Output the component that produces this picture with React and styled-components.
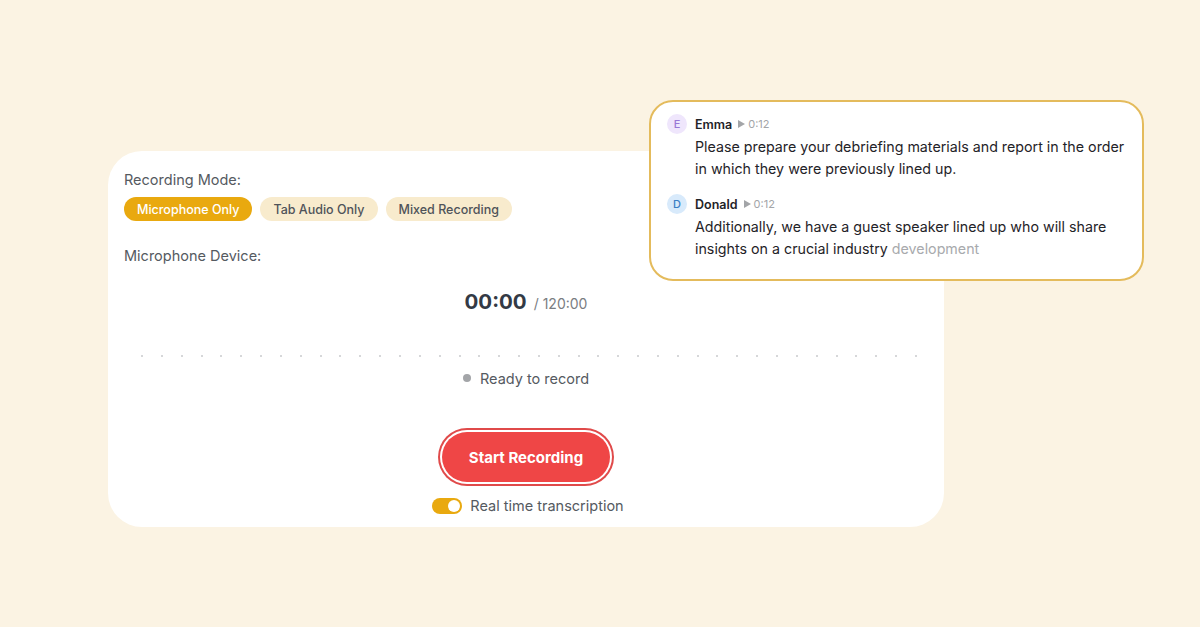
import React from "react";
import styled, { createGlobalStyle } from "styled-components";

const GlobalStyle = createGlobalStyle`
  html, body {
    margin: 0;
    padding: 0;
    background: #fbf3e3;
    font-family: Inter, "Noto Sans", "Liberation Sans", sans-serif;
  }
`;

const Stage = styled.div`
  position: relative;
  width: 1200px;
  height: 627px;
  box-sizing: border-box;
  padding: 151px 0 0 108px;
  overflow: hidden;
`;

const RecorderCard = styled.div`
  width: 836px;
  height: 376px;
  box-sizing: border-box;
  background: #fff;
  border-radius: 34px;
  padding: 19px 16px 0 16px;
  display: flex;
  flex-direction: column;
`;

const Label = styled.div`
  font-size: 14.5px;
  line-height: 20px;
  color: #555a61;
  margin-top: ${(p) => p.$top || 0}px;
`;

const ModeRow = styled.div`
  display: flex;
  gap: 8px;
  margin-top: 7px;
`;

const ModePill = styled.button`
  height: 24px;
  padding: 0 13px;
  border: none;
  border-radius: 12px;
  font-family: inherit;
  font-size: 12.5px;
  font-weight: 500;
  background: ${(p) => (p.$active ? "#e9a90f" : "#f8ebcd")};
  color: ${(p) => (p.$active ? "#fff" : "#4f5359")};
  cursor: pointer;
`;

const TimerRow = styled.div`
  display: flex;
  justify-content: center;
  align-items: baseline;
  gap: 7px;
  margin-top: 22px;
`;

const TimerNow = styled.span`
  font-size: 20.5px;
  font-weight: 700;
  color: #333a45;
  line-height: 28px;
`;

const TimerMax = styled.span`
  font-size: 14px;
  color: #7a7d82;
`;

const DotsRow = styled.div`
  display: flex;
  justify-content: space-between;
  padding: 0 11px 0 17px;
  margin-top: 39px;
`;

const WaveDot = styled.span`
  width: 2px;
  height: 2px;
  border-radius: 50%;
  background: #c9cacc;
`;

const StatusRow = styled.div`
  display: flex;
  justify-content: center;
  align-items: center;
  gap: 9px;
  margin-top: 12px;
  font-size: 14.5px;
  color: #555a61;
  line-height: 20px;
`;

const StatusDot = styled.span`
  width: 8px;
  height: 8px;
  border-radius: 50%;
  background: #a3a5a8;
  margin-top: -2px;
`;

const StartButton = styled.button`
  align-self: center;
  margin-top: 43px;
  width: 168px;
  height: 50px;
  border: none;
  border-radius: 25px;
  background: #ef4646;
  color: #fff;
  font-family: inherit;
  font-size: 15px;
  font-weight: 700;
  box-shadow: 0 0 0 2px #fff, 0 0 0 4px #e04a4a;
  cursor: pointer;
`;

const ToggleRow = styled.div`
  display: flex;
  justify-content: center;
  align-items: center;
  gap: 8px;
  margin-top: 15px;
  margin-left: 4px;
  font-size: 14.5px;
  color: #555a61;
`;

const Switch = styled.span`
  width: 30px;
  height: 16px;
  border-radius: 8px;
  background: #e9a90f;
  display: flex;
  justify-content: flex-end;
  align-items: center;
  padding: 0 2px;
  box-sizing: border-box;
`;

const Knob = styled.span`
  width: 12px;
  height: 12px;
  border-radius: 50%;
  background: #fff;
`;

const TranscriptCard = styled.div`
  position: absolute;
  top: 100px;
  left: 649px;
  width: 495px;
  height: 181px;
  box-sizing: border-box;
  background: #fff;
  border: 2px solid #e4bb5c;
  border-radius: 24px;
  padding: 12px 16px 0 16px;
  display: flex;
  flex-direction: column;
  gap: 14px;
`;

const Entry = styled.div`
  display: flex;
  flex-direction: column;
`;

const Speaker = styled.div`
  display: flex;
  align-items: center;
  height: 20px;
`;

const Avatar = styled.span`
  width: 20px;
  height: 20px;
  border-radius: 50%;
  background: ${(p) => p.$bg};
  color: ${(p) => p.$fg};
  font-size: 11px;
  font-weight: 500;
  display: flex;
  align-items: center;
  justify-content: center;
  margin-right: 8px;
`;

const Name = styled.span`
  font-size: 12.5px;
  font-weight: 600;
  color: #1f2328;
  margin-right: 6px;
`;

const Stamp = styled.span`
  display: flex;
  align-items: center;
  gap: 3px;
  font-size: 11px;
  color: #a3a5a8;
`;

const Message = styled.div`
  padding-left: 28px;
  margin-top: 2px;
  font-size: 14.25px;
  line-height: 22px;
  color: #1f2328;
`;

const Line = styled.span`
  display: block;
  white-space: nowrap;
`;

const Pending = styled.span`
  color: #a8aaad;
`;

const PlayIcon = () => (
  <svg width="7" height="8" viewBox="0 0 7 8">
    <path d="M0 0 L7 4 L0 8 Z" fill="#a3a5a8" />
  </svg>
);

const modes = ["Microphone Only", "Tab Audio Only", "Mixed Recording"];

export default function App() {
  return (
    <>
      <GlobalStyle />
      <Stage>
        <RecorderCard>
          <Label>Recording Mode:</Label>
          <ModeRow>
            {modes.map((m, i) => (
              <ModePill key={m} $active={i === 0}>
                {m}
              </ModePill>
            ))}
          </ModeRow>
          <Label $top={25}>Microphone Device:</Label>
          <TimerRow>
            <TimerNow>00:00</TimerNow>
            <TimerMax>/ 120:00</TimerMax>
          </TimerRow>
          <DotsRow>
            {Array.from({ length: 40 }).map((_, i) => (
              <WaveDot key={i} />
            ))}
          </DotsRow>
          <StatusRow>
            <StatusDot />
            Ready to record
          </StatusRow>
          <StartButton>Start Recording</StartButton>
          <ToggleRow>
            <Switch>
              <Knob />
            </Switch>
            Real time transcription
          </ToggleRow>
        </RecorderCard>

        <TranscriptCard>
          <Entry>
            <Speaker>
              <Avatar $bg="#efe6fc" $fg="#9a78d6">E</Avatar>
              <Name>Emma</Name>
              <Stamp>
                <PlayIcon />
                0:12
              </Stamp>
            </Speaker>
            <Message>
              <Line>Please prepare your debriefing materials and report in the order</Line>
              <Line>in which they were previously lined up.</Line>
            </Message>
          </Entry>
          <Entry>
            <Speaker>
              <Avatar $bg="#d8eafb" $fg="#3a7fc4">D</Avatar>
              <Name>Donald</Name>
              <Stamp>
                <PlayIcon />
                0:12
              </Stamp>
            </Speaker>
            <Message>
              <Line>Additionally, we have a guest speaker lined up who will share</Line>
              <Line>
                insights on a crucial industry <Pending>development</Pending>
              </Line>
            </Message>
          </Entry>
        </TranscriptCard>
      </Stage>
    </>
  );
}
